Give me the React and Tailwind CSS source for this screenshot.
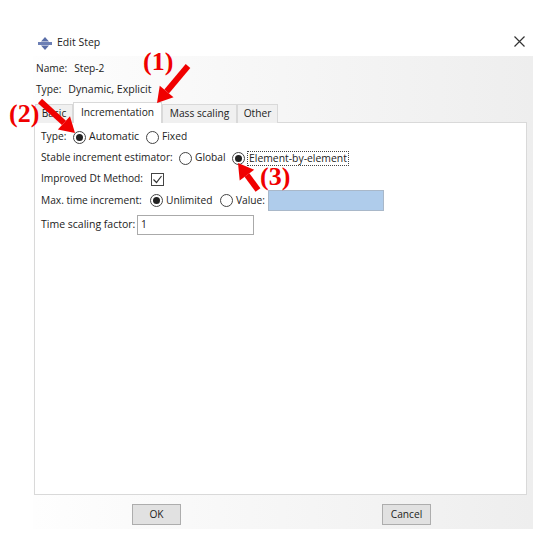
import React from 'react';

const Radio = ({ checked }) => (
  <span className="flex h-[13px] w-[13px] shrink-0 items-center justify-center rounded-full border border-[#444] bg-white">
    {checked && <span className="h-[7px] w-[7px] rounded-full bg-[#222]" />}
  </span>
);

const Tab = ({ label, className }) => (
  <div className={`flex h-[19px] items-center justify-center border border-b-0 border-[#d9d9d9] bg-[#f0f0f0] ${className}`}>{label}</div>
);

const Arrow = ({ x1, y1, x2, y2 }) => {
  const a = Math.atan2(y2 - y1, x2 - x1);
  const len = 15;
  const wide = 9;
  const bx = x2 - Math.cos(a) * len;
  const by = y2 - Math.sin(a) * len;
  const nx = -Math.sin(a) * wide;
  const ny = Math.cos(a) * wide;
  return (
    <g>
      <line x1={x1} y1={y1} x2={bx} y2={by} stroke="#f00000" strokeWidth="6" />
      <polygon points={`${x2},${y2} ${bx + nx},${by + ny} ${bx - nx},${by - ny}`} fill="#f00000" />
    </g>
  );
};

function App() {
  return (
    <div className="relative h-[549px] w-[556px] overflow-hidden bg-white font-['Open_Sans','Noto_Sans',sans-serif] text-[10.2px] text-[#222]">
      {/* title bar */}
      <div className="ml-[38px] flex h-[56px] w-[487px] items-end justify-between pb-[5px]">
        <div className="flex items-center gap-[5px]">
          <svg width="14" height="13" viewBox="0 0 14 13">
            <path d="M7 0 L11 4.5 H3 Z M7 13 L11 8.5 H3 Z" fill="#5a6ea8" />
            <rect x="0" y="5" width="14" height="3" fill="#6c7fb5" />
          </svg>
          <span className="text-[10.5px]">Edit Step</span>
        </div>
        <svg width="11" height="11" viewBox="0 0 11 11" className="mb-[4px]">
          <path d="M0.5 0.5 L10.5 10.5 M10.5 0.5 L0.5 10.5" stroke="#333" strokeWidth="1.2" />
        </svg>
      </div>

      {/* dialog body */}
      <div className="ml-[33px] flex h-[473px] w-[500px] flex-col bg-gradient-to-r from-[#fefefe] to-[#eeeeee] pt-[2px]">
        <div className="flex h-[21px] items-center gap-[7px] pl-[3px]">
          <span>Name:</span>
          <span>Step-2</span>
        </div>
        <div className="flex h-[21px] items-center gap-[7px] pl-[3px]">
          <span>Type:</span>
          <span className="text-[10.6px]">Dynamic, Explicit</span>
        </div>

        {/* tabs */}
        <div className="relative z-10 ml-[2px] mt-[2px] flex h-[21px] items-end">
          <Tab label="Basic" className="w-[38px]" />
          <div className="flex h-[21px] w-[89px] items-center justify-center border border-b-0 border-[#d9d9d9] bg-white">Incrementation</div>
          <Tab label="Mass scaling" className="w-[75px]" />
          <Tab label="Other" className="w-[41px]" />
        </div>

        {/* panel */}
        <div className="-mt-px ml-px flex h-[373px] w-[493px] flex-col border border-[#d9d9d9] bg-white pl-[6px] pt-[4px]">
          <div className="flex h-[20px] items-center">
            <span className="w-[32px]">Type:</span>
            <Radio checked />
            <span className="ml-[3px] w-[57px] text-[10.5px]">Automatic</span>
            <Radio />
            <span className="ml-[3px]">Fixed</span>
          </div>
          <div className="mt-px flex h-[20px] items-center">
            <span className="w-[138px]">Stable increment estimator:</span>
            <Radio />
            <span className="ml-[3px] w-[37px]">Global</span>
            <Radio checked />
            <span className="ml-[2px] border border-dotted border-[#444] px-px text-[10.4px] leading-[13px]">Element-by-element</span>
          </div>
          <div className="mt-px flex h-[20px] items-center">
            <span className="w-[110px]">Improved Dt Method:</span>
            <span className="flex h-[13px] w-[13px] items-center justify-center border border-[#444] bg-white">
              <svg width="11" height="11" viewBox="0 0 11 11">
                <path d="M1.5 5.5 L4.5 8.5 L9.5 2" fill="none" stroke="#333" strokeWidth="1.2" />
              </svg>
            </span>
          </div>
          <div className="mt-px flex h-[21px] items-center">
            <span className="w-[109px]">Max. time increment:</span>
            <Radio checked />
            <span className="ml-[3px] w-[54px]">Unlimited</span>
            <Radio />
            <span className="ml-[3px] w-[32px]">Value:</span>
            <div className="h-[21px] w-[116px] border border-[#a9b8c9] bg-[#afcceb]" />
          </div>
          <div className="mt-[4px] flex h-[20px] items-center">
            <span className="w-[96px] text-[10.5px]">Time scaling factor:</span>
            <div className="flex h-[20px] w-[117px] items-center border border-[#aaa] bg-white pl-[3px]">1</div>
          </div>
        </div>

        {/* buttons */}
        <div className="mt-[9px] flex justify-between pl-[99px] pr-[102px]">
          <button className="h-[21px] w-[49px] border border-[#adadad] bg-[#e1e1e1]">OK</button>
          <button className="h-[21px] w-[49px] border border-[#adadad] bg-[#e1e1e1]">Cancel</button>
        </div>
      </div>

      {/* red annotations over the dialog */}
      <svg className="absolute left-0 top-0 z-20" width="556" height="549">
        <Arrow x1={188} y1={66} x2={157} y2={103} />
        <Arrow x1={40} y1={101} x2={75} y2={133} />
        <Arrow x1={258} y1={190} x2={238} y2={163} />
      </svg>
      <span className="absolute left-[143px] top-[48px] z-20 font-['Liberation_Serif',serif] text-[26px] font-bold leading-[28px] text-[#f00000]">(1)</span>
      <span className="absolute left-[9px] top-[100px] z-20 font-['Liberation_Serif',serif] text-[26px] font-bold leading-[28px] text-[#f00000]">(2)</span>
      <span className="absolute left-[260px] top-[165px] z-20 font-['Liberation_Serif',serif] text-[26px] font-bold leading-[23px] text-[#f00000]">(3)</span>
    </div>
  );
}

export default App;
